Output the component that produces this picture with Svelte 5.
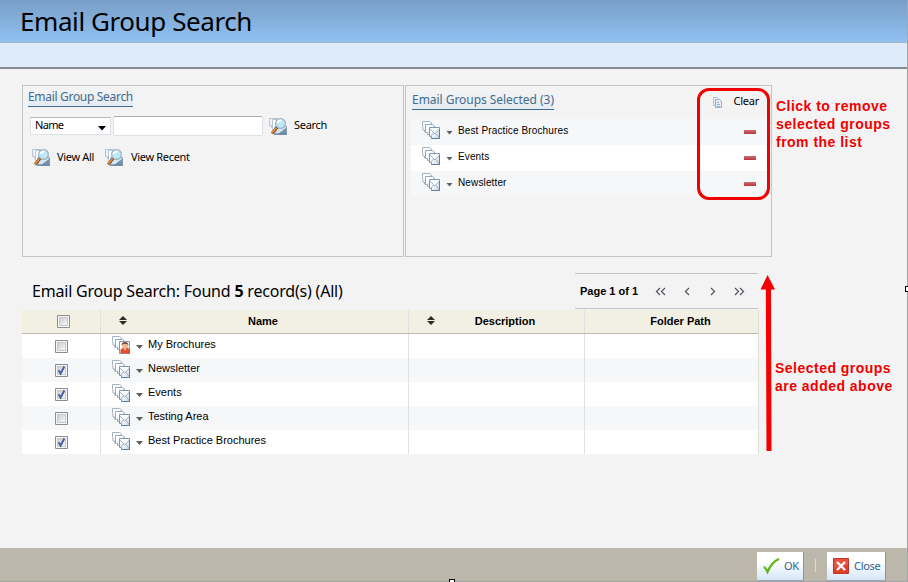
<script>
  const selected = ['Best Practice Brochures', 'Events', 'Newsletter'];
  const rows = [
    { name: 'My Brochures', checked: false, person: true },
    { name: 'Newsletter', checked: true },
    { name: 'Events', checked: true },
    { name: 'Testing Area', checked: false },
    { name: 'Best Practice Brochures', checked: true }
  ];
</script>

{#snippet groupIcon(person)}
  <svg class="icon" width="18" height="18" viewBox="0 0 18 18">
    <path d="M.5 3V.5h7l2 1.500v9H2.500v-2H1z" fill="url(#sheet)" stroke="#a3b3c4" />
    <path d="M3.500 3.500h7l2 1.500v8.500H5.500v-2h-2z" fill="url(#sheet)" stroke="#96a9bd" />
    {#if person}
      <path d="M7.500 5.500h10v12h-10z" fill="url(#sheet)" stroke="#8299b2" />
      <path d="M8.500 17.500v-4l3-2h3.500l3 2v4z" fill="#e2512c" />
      <circle cx="13" cy="9.500" r="3" fill="#efb58c" />
      <path d="M9.500 9c0-4 7-4 7 0l-2-1h-3z" fill="#754d3d" />
      <path d="M11.500 12.500l1.500 2 1.500-2z" fill="#fbd9bc" />
    {:else}
      <path d="M7.500 6.500h10v11h-8v-2h-2z" fill="url(#sheet)" stroke="#8197ae" />
      <path d="M8 8l5 5 4.500-5M8.500 15.500l3-3.500M17 16.500l-3-4" fill="none" stroke="#9db1c6" />
      <path d="M9.500 17.500h8v-9" fill="none" stroke="#617d9d" />
    {/if}
  </svg>
{/snippet}

{#snippet searchIcon()}
  <svg class="icon" width="19" height="18" viewBox="0 0 19 18">
    <path d="M.5 1.500h8v9h-6v-2h-2z" fill="#edf3f8" stroke="#b5c5d3" />
    <path d="M3.500 2.500h9v10h-9z" fill="#fff" stroke="#b9c7d3" />
    <path d="M6 9.500h11.500v7.500H6z" fill="#d9e6f0" stroke="#8ba5bc" />
    <path d="M9 17h8.500v-6.500z" fill="#7591ad" />
    <path d="M5 17.200h13" stroke="#54718f" />
    <circle cx="11.500" cy="6.500" r="4.900" fill="#c0e7f6" stroke="#9bb2be" stroke-width="1.200" />
    <path d="M8.500 6c0-2 3-3 4-2" fill="none" stroke="#fff" stroke-width="2" />
    <path d="M8 10.500l-5 6" stroke="#695344" stroke-width="3" />
    <path d="M7.400 10.800l-4.600 5.500" stroke="#f08b2c" stroke-width="1.700" />
  </svg>
{/snippet}

{#snippet box(checked)}
  <svg class="box" width="13" height="13" viewBox="0 0 13 13">
    <path d="M.5.5h12v12H.5z" fill="#f6f6f6" stroke="#8b8d8f" />
    <path d="M2.500 2.500h8v8h-8z" fill="url(#check-shade)" stroke="#c6c9cc" />
    {#if checked}<path d="M3.600 6.300l2 3.200 3.700-7" fill="none" stroke="#425f9d" stroke-width="1.900" />{/if}
  </svg>
{/snippet}

{#snippet sorter()}
  <svg class="sorter" width="8" height="9" viewBox="0 0 8 9"><path d="M0 4l4-4 4 4zM0 5h8L4 9z" fill="#292c2a" /></svg>
{/snippet}

<div class="page">
  <svg width="0" height="0" class="defs">
    <linearGradient id="check-shade" x2="1" y2="1"><stop stop-color="#c9ccd0" /><stop offset="1" stop-color="#fafafa" /></linearGradient>
    <linearGradient id="sheet" x2="1" y2="1"><stop offset=".35" stop-color="#fff" /><stop offset="1" stop-color="#c9d7e6" /></linearGradient>
  </svg>
  <header><h1>Email Group Search</h1></header>
  <div class="strip"></div>

  <main>
    <div class="panels">
      <section class="find">
        <h2>Email Group Search</h2>
        <div class="fields">
          <div class="select"><span>Name</span><svg width="8" height="5" viewBox="0 0 8 5"><path d="M0 0h8L4 4.500z" /></svg></div>
          <input aria-label="Search" />
          {@render searchIcon()}<span class="search">Search</span>
        </div>
        <div class="views">
          {@render searchIcon()}<span class="all">View All</span>
          {@render searchIcon()}<span class="recent">View Recent</span>
        </div>
      </section>
      <section class="selected">
        <div class="selected-head">
          <h2>Email Groups Selected (3)</h2>
          <svg width="9" height="11" viewBox="0 0 9 11"><path d="M.5.5h4l1 1v7h-5z" fill="#e1e9f1" stroke="#b9c4ce" /><path d="M2.500 2.500h4l2 2v6h-6z" fill="#e1ebf5" stroke="#9bb0c6" /><path d="M4 5.500h2M4 7.500h3M4 9.500h3" stroke="#96b3d0" /></svg>
          <span class="clear">Clear</span>
        </div>
        {#each selected as name}
          <div class="selected-row">
            {@render groupIcon(false)}<i class="caret"></i><span>{name}</span><b class="minus"></b>
          </div>
        {/each}
      </section>
    </div>

    <div class="summary">
      <h3>Email Group Search: Found <b>5</b> record(s) (All)</h3>
      <div class="pager">
        <span>Page 1 of 1</span>
        <svg width="92" height="9" viewBox="0 0 92 9"><path d="M5 1L1.500 4.500 5 8M10 1L6.500 4.500 10 8M34 1l-3.500 3.500L34 8M56 1l3.500 3.500L56 8M80 1l3.500 3.500L80 8M85 1l3.500 3.500L85 8" fill="none" stroke="#555962" stroke-width="1.300" /></svg>
      </div>
    </div>

    <div class="table">
      <div class="row head">
        <div class="cell">{@render box(false)}</div>
        <div class="cell">{@render sorter()}<span>Name</span></div>
        <div class="cell">{@render sorter()}<span>Description</span></div>
        <div class="cell"><span>Folder Path</span></div>
      </div>
      {#each rows as row}
        <div class="row">
          <div class="cell">{@render box(row.checked)}</div>
          <div class="cell name">{@render groupIcon(row.person)}<i class="caret"></i><span>{row.name}</span></div>
          <div class="cell"></div>
          <div class="cell"></div>
        </div>
      {/each}
    </div>
  </main>

  <footer>
    <button class="ok"><svg width="19" height="17" viewBox="0 0 19 17"><path d="M1.500 9.500c2-.5 2.500 1.500 4 4.500C8 8 12 3 17 1" fill="none" stroke="#63b51a" stroke-width="2.300" /></svg><span>OK</span></button>
    <i class="divider"></i>
    <button class="close"><svg width="16" height="16" viewBox="0 0 16 16"><path d="M.5.5h15v15H.5z" fill="#df3e27" stroke="#ba3825" /><path d="M1 1h14v6L1 10z" fill="#ed6651" opacity=".6" /><path d="M4 4l8 8M12 4l-8 8" stroke="#fff" stroke-width="2.400" /></svg><span>Close</span></button>
  </footer>

  <div class="outline"></div>
  <p class="note remove">Click to remove<br />selected groups<br />from the list</p>
  <svg class="arrow" width="16" height="178" viewBox="0 0 16 178"><path d="M7.500 0L15 14.500h-4L11.500 176h-5L5.800 14.500H.5z" fill="#f50000" /></svg>
  <p class="note above">Selected groups<br />are added above</p>
  <i class="handle side"></i>
  <i class="handle bottom"></i>
</div>

<style>
  :global(body) { margin: 0; }
  * { box-sizing: border-box; }
  .page { position: relative; width: 908px; height: 582px; overflow: hidden; display: flex; flex-direction: column; background: #f3f3f3; border-right: 1px solid #a5a5a5; border-bottom: 1px solid #a5a5a5; font: 11px 'Liberation Sans', Arial, sans-serif; color: #000; }
  .defs { position: absolute; }
  h1, h2, h3, p { margin: 0; font-weight: 400; }
  svg { display: block; flex: none; }
  span { white-space: nowrap; }
  header { height: 43px; flex: none; padding-left: 20px; background: linear-gradient(#789fc8, #90c0f1); border-bottom: 1px solid #a5b6c8; }
  h1 { font: 26px/42px 'Noto Sans', sans-serif; letter-spacing: -.42px; white-space: nowrap; }
  .strip { height: 26px; flex: none; background: #deebf8; border-bottom: 2px solid #858b8e; }
  main { flex: 1; padding: 16px 0 0 22px; }
  .panels { display: flex; gap: 1px; height: 172px; }
  section { border: 1px solid #c4c4c4; }
  .find { width: 382px; padding: 3px 0 0 5px; }
  .selected { width: 367px; padding: 5px 0 0 6px; }
  h2 { width: max-content; height: 18px; font: 12px/16px 'Noto Sans', sans-serif; color: #426b8d; border-bottom: 1px solid #426b8d; background: linear-gradient(#f3f3f3, #e4ebf2); }
  .find h2 { letter-spacing: -.31px; }
  .fields { display: flex; align-items: center; margin: 9px 0 0 2px; font-family: 'Noto Sans', sans-serif; letter-spacing: -.3px; }
  .fields .icon { margin-top: -1px; }
  .fields span { margin-top: -3px; }
  .select { display: flex; align-items: center; justify-content: space-between; width: 81px; height: 18px; padding: 0 4px; background: #fff; border: 1px solid #dce1e7; border-top-color: #b4b7bd; letter-spacing: -.7px; }
  .select svg { margin-top: 4px; }
  input { width: 150px; height: 20px; margin: 0 6px 0 2px; border: 1px solid #dce1e7; border-top-color: #a9adb5; background: #fff; border-radius: 2px; }
  .search { margin-left: 6px; }
  .views { display: flex; align-items: center; margin: 12px 0 0 4px; font-family: 'Noto Sans', sans-serif; letter-spacing: -.32px; }
  .views span { margin-top: -2px; }
  .all { width: 48px; margin-left: 6px; }
  .recent { margin-left: 7px; }
  .selected-head { display: flex; height: 28px; }
  .selected-head h2 { margin-top: 1px; letter-spacing: -.04px; }
  .selected-head svg { margin: 6px 0 0 auto; }
  .clear { margin: 2px 12px 0 12px; font: 11px/15px 'Noto Sans', sans-serif; letter-spacing: -.25px; }
  .selected-row { display: flex; align-items: center; height: 26px; margin-left: -1px; padding: 0 14px 3px 11px; background: #f5f7f9; font-size: 10px; letter-spacing: .13px; }
  .selected-row .icon { margin-top: -1px; }
  .selected-row:nth-child(3) { background: #fff; }
  .caret { flex: none; width: 7px; height: 4px; margin: 4px 5px 0 6px; background: #5d6062; clip-path: polygon(0 0, 100% 0, 50% 100%); }
  .minus { width: 12px; height: 4px; margin: 3px 1px 0 auto; background: linear-gradient(#ca7070, #ba3441); }
  .summary { display: flex; justify-content: space-between; height: 53px; width: 736px; padding-top: 16px; }
  h3 { margin: 8px 0 0 10px; font: 16px/20px 'Noto Sans', sans-serif; letter-spacing: -.2px; white-space: nowrap; }
  h3 b { font-weight: 700; }
  .pager { display: flex; align-items: center; width: 183px; height: 36px; padding-left: 5px; border: solid #c4c4c4; border-width: 1px 0; font-weight: 700; }
  .pager svg { margin-left: 17px; }
  .table { width: 737px; border-right: 1px solid #deded9; }
  .row { display: grid; grid-template-columns: 78px 308px 176px 1fr; height: 24px; background: #fff; }
  .row:nth-child(odd) { background: #f5f7f9; }
  .row.head { background: #f2f0e3; border-bottom: 1px solid #bdbbac; font-weight: 700; }
  .cell { display: flex; align-items: center; border-left: 1px solid #e0e0e0; }
  .cell:first-child { border: 0; padding-left: 33px; }
  .head .cell:first-child { padding-left: 35px; }
  .cell .box { margin-top: 1px; }
  .head .cell .box { margin-top: -1px; }
  .head .cell span { flex: 1; text-align: center; margin-top: -2px; }
  .sorter { margin: -3px 0 0 18px; }
  .head .cell:nth-child(2) span { padding-right: 9px; }
  .head .cell:nth-child(3) span { padding-right: 9px; }
  .head .cell:nth-child(4) span { padding-left: 18px; }
  .cell.name { padding-left: 11px; }
  .name span { margin-top: -5px; }
  .name .icon { margin-top: -2px; }
  .name .caret { margin: 2px 5px 0 6px; }
  footer { display: flex; height: 33px; padding: 4px 21px 0 757px; background: #bcb7ab; flex: none; }
  button { display: flex; align-items: center; height: 29px; padding: 0; border: 0; border-right: 1px solid #8d9299; border-bottom: 1px solid #9ba4af; background: linear-gradient(#fff 35%, #d5e6f8); font: 11px 'Noto Sans', sans-serif; letter-spacing: -.3px; color: #38648c; }
  button span { margin-top: -2px; }
  .ok { width: 47px; padding-left: 5px; gap: 3px; }
  .close { width: 59px; padding-left: 6px; gap: 5px; }
  .divider { width: 1px; height: 13px; margin: 7px 11px 0; background: #dedad2; }
  .outline { position: absolute; left: 697px; top: 88px; width: 73px; height: 112px; border: 3px solid #f00000; border-radius: 12px; }
  .note { position: absolute; font-weight: 700; font-size: 14px; line-height: 18px; letter-spacing: .48px; color: #f00000; white-space: nowrap; }
  .remove { left: 776px; top: 97px; }
  .above { left: 775px; top: 359px; }
  .arrow { position: absolute; left: 760px; top: 275px; }
  .handle { position: absolute; width: 6px; height: 6px; border: 1px solid #000; background: #fff; }
  .side { left: 905px; top: 286px; }
  .bottom { left: 449px; top: 579px; }
  .page { overflow: clip; overflow-clip-margin: border-box 1px; }
</style>
